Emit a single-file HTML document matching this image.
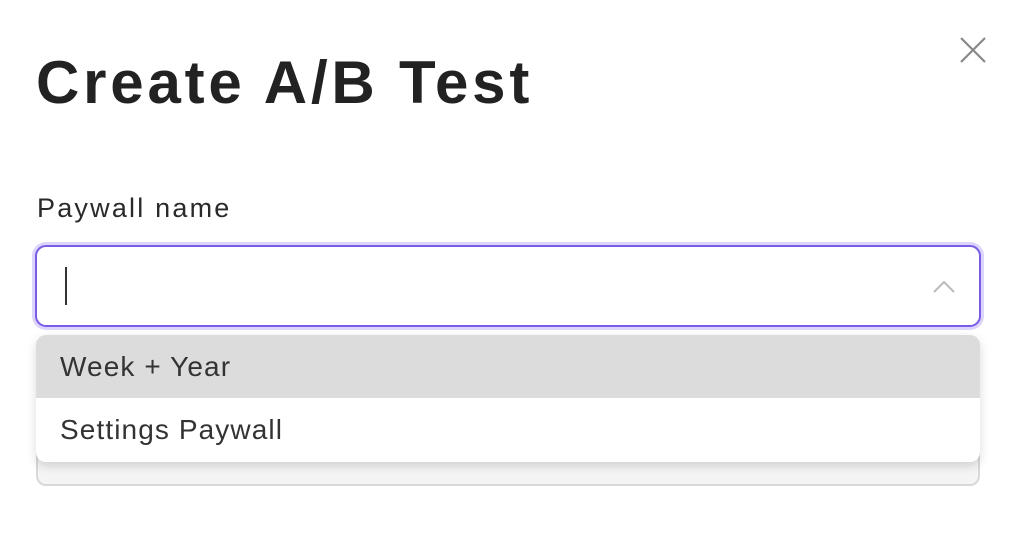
<!DOCTYPE html>
<html><head><style>
*{margin:0;padding:0;box-sizing:border-box}
body{width:1018px;height:558px;background:#fff;font-family:"Liberation Sans",sans-serif;position:relative;overflow:hidden;color:#262626}
.t{position:absolute;left:36px;top:48px;font-size:60px;font-weight:bold;letter-spacing:3.8px;color:#222}
.l{position:absolute;left:37px;top:193px;font-size:27px;letter-spacing:2.2px;color:#2a2a2a}
.under{position:absolute;left:36px;top:430px;width:944px;height:56px;border:2px solid #d8d8d8;border-radius:10px;background:#f4f4f4}
.inp{position:absolute;left:35px;top:245px;width:946px;height:82px;border:2px solid #7b5ce8;border-radius:11px;box-shadow:0 0 0 3px #ddd4fb;background:#fff}
.caret{position:absolute;left:28px;top:20px;width:2px;height:38px;background:#333}
.dd{position:absolute;left:36px;top:335px;width:944px;height:127px;border-radius:10px;background:#fff;box-shadow:0 4px 10px rgba(0,0,0,.15);overflow:hidden}
.it{height:63px;line-height:63px;padding-left:24px;font-size:28px;letter-spacing:1.1px;color:#333}
.it.a{background:#dcdcdc}
</style></head><body>
<div class="t">Create A/B Test</div>
<svg style="position:absolute;left:960px;top:37px" width="26" height="26"><path d="M1 1L25 25M25 1L1 25" stroke="#888" stroke-width="2.2"/></svg>
<div class="l">Paywall name</div>
<div class="under"></div>
<div class="inp"><div class="caret"></div>
<svg style="position:absolute;left:896px;top:32px" width="22" height="14"><path d="M1 13L11 3L21 13" stroke="#bbb" stroke-width="2" fill="none"/></svg></div>
<div class="dd"><div class="it a">Week + Year</div><div class="it">Settings Paywall</div></div>
</body></html>
